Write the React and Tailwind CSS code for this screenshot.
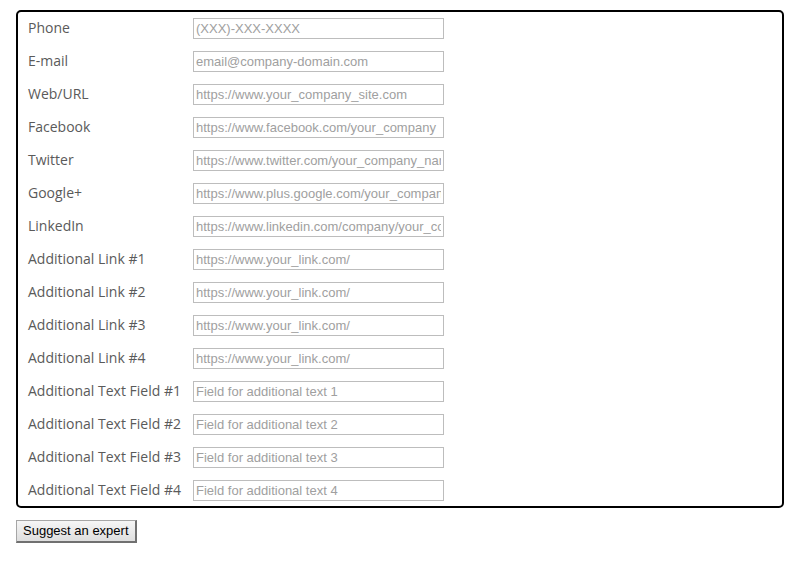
import React from 'react';

const fields = [
  { label: 'Phone', placeholder: '(XXX)-XXX-XXXX' },
  { label: 'E-mail', placeholder: 'email@company-domain.com' },
  { label: 'Web/URL', placeholder: 'https://www.your_company_site.com' },
  { label: 'Facebook', placeholder: 'https://www.facebook.com/your_company' },
  { label: 'Twitter', placeholder: 'https://www.twitter.com/your_company_name' },
  { label: 'Google+', placeholder: 'https://www.plus.google.com/your_company' },
  { label: 'LinkedIn', placeholder: 'https://www.linkedin.com/company/your_company' },
  { label: 'Additional Link #1', placeholder: 'https://www.your_link.com/' },
  { label: 'Additional Link #2', placeholder: 'https://www.your_link.com/' },
  { label: 'Additional Link #3', placeholder: 'https://www.your_link.com/' },
  { label: 'Additional Link #4', placeholder: 'https://www.your_link.com/' },
  { label: 'Additional Text Field #1', placeholder: 'Field for additional text 1' },
  { label: 'Additional Text Field #2', placeholder: 'Field for additional text 2' },
  { label: 'Additional Text Field #3', placeholder: 'Field for additional text 3' },
  { label: 'Additional Text Field #4', placeholder: 'Field for additional text 4' },
];

const App = () => {
  return (
    <div className="bg-white min-h-screen pt-[10px] px-4">
      {/* Contact fields */}
      <div className="border-2 border-black rounded-[5px] pt-[6px] pb-[5px] pl-[10px] flex flex-col gap-3">
        {fields.map((f) => (
          <div key={f.label} className="flex items-center h-[21px]">
            <label className="w-[165px] -mt-[2px] text-[14px] text-[#5a5a5a] font-['Open_Sans',sans-serif] whitespace-nowrap">
              {f.label}
            </label>
            <input
              type="text"
              placeholder={f.placeholder}
              className="w-[251px] h-[21px] border border-[#bdbdbd] px-[2px] text-[13px] font-['Liberation_Sans',Arial,sans-serif] text-[#333] placeholder:text-[#a0a0a0] outline-none"
            />
          </div>
        ))}
      </div>

      <button className="mt-3 h-[23px] px-[6px] text-[13px] text-black font-['Liberation_Sans',Arial,sans-serif] bg-gradient-to-b from-[#f6f6f6] to-[#dedede] border border-[#a6a6a6] border-r-[#707070] border-b-[#707070] border-r-2 border-b-2">
        Suggest an expert
      </button>
    </div>
  );
};

export default App;
